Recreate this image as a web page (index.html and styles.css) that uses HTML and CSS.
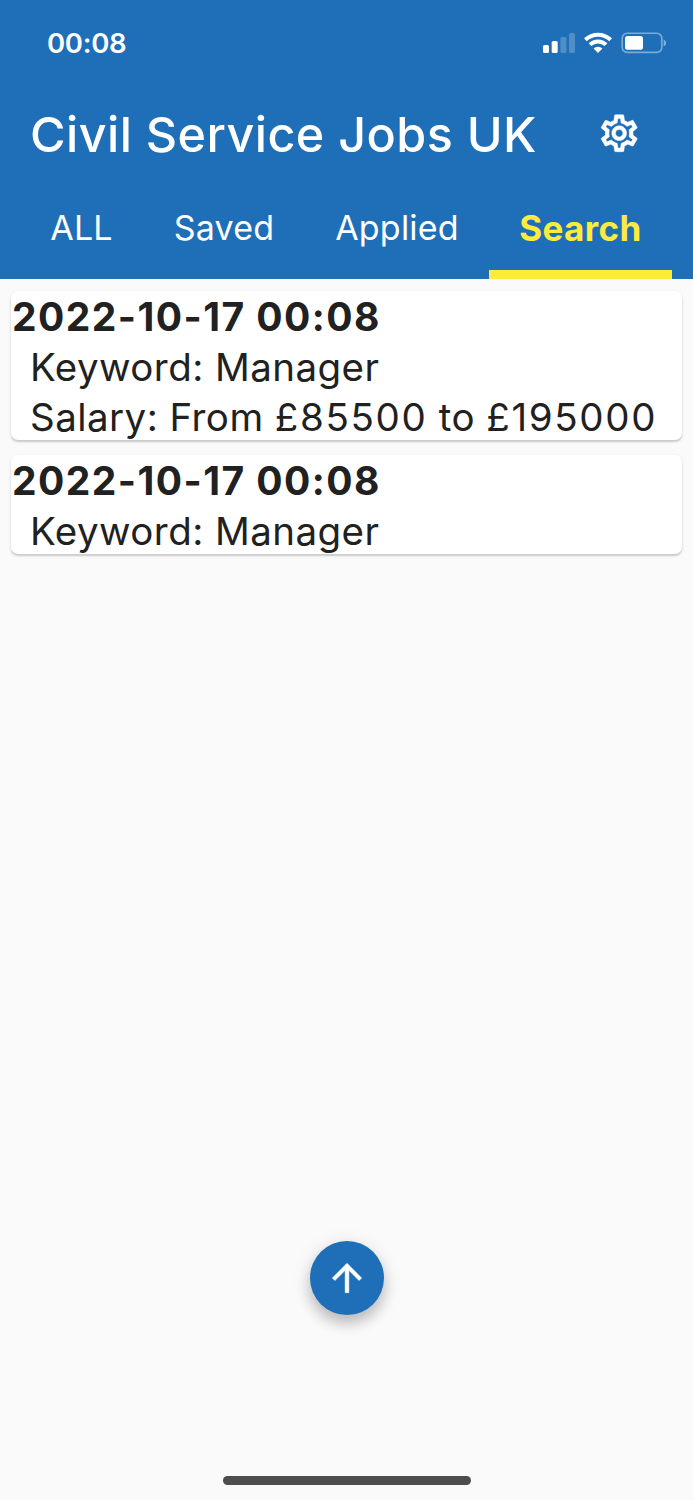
FILE: index.html
```html
<!DOCTYPE html>
<html lang="en">
<head>
  <meta charset="UTF-8">
  <meta name="viewport" content="width=device-width, initial-scale=1.0">
  <title>Civil Service Jobs UK</title>
  <link rel="stylesheet" href="styles.css">
</head>
<body>
  <header>
    <div class="status-bar">
      <span class="time">00:08</span>
      <svg class="status-icons" width="124" height="22" viewBox="0 0 124 22">
        <!-- Signal -->
        <g fill="#fff">
          <rect x="0" y="13" width="6" height="8" rx="1.6"/>
          <rect x="8.7" y="9" width="6" height="12" rx="1.6"/>
          <rect x="17.4" y="5" width="6" height="16" rx="1.6" opacity=".22"/>
          <rect x="26" y="1" width="6" height="20" rx="1.6" opacity=".22"/>
        </g>
        <!-- Wifi -->
        <g fill="none" stroke="#fff" stroke-width="4">
          <path d="M42.4 7.8a18 18 0 0 1 25.2 0"/>
          <path d="M47 12.7a11.4 11.4 0 0 1 16 0"/>
        </g>
        <path d="M55 21l-4.4-4.5a6.2 6.2 0 0 1 8.8 0z" fill="#fff"/>
        <!-- Battery -->
        <rect x="79.2" y="1.2" width="39.6" height="19.2" rx="5" fill="none" stroke="#fff" stroke-width="1.6" opacity=".42"/>
        <rect x="82" y="4" width="18" height="13.8" rx="2.6" fill="#fff"/>
        <path d="M120.6 7.4q2.6 1.2 2.6 3.5t-2.6 3.5z" fill="#fff" opacity=".45"/>
      </svg>
    </div>
    <div class="app-bar">
      <h1>Civil Service Jobs UK</h1>
      <svg class="settings" viewBox="0 0 24 24" fill="#fff" stroke="#fff" stroke-width=".25">
        <path d="M19.43 12.98c.04-.32.07-.64.07-.98 0-.34-.03-.66-.07-.98l2.11-1.65c.19-.15.24-.42.12-.64l-2-3.46c-.09-.16-.26-.25-.44-.25-.06 0-.12.01-.17.03l-2.49 1c-.52-.4-1.08-.73-1.69-.98l-.38-2.65C14.46 2.18 14.25 2 14 2h-4c-.25 0-.46.18-.49.42l-.38 2.65c-.61.25-1.17.59-1.69.98l-2.49-1c-.06-.02-.12-.03-.18-.03-.17 0-.34.09-.43.25l-2 3.46c-.13.22-.07.49.12.64l2.11 1.65c-.04.32-.07.65-.07.98 0 .33.03.66.07.98l-2.11 1.65c-.19.15-.24.42-.12.64l2 3.46c.09.16.26.25.44.25.06 0 .12-.01.17-.03l2.49-1c.52.4 1.08.73 1.69.98l.38 2.65c.03.24.24.42.49.42h4c.25 0 .46-.18.49-.42l.38-2.65c.61-.25 1.17-.59 1.69-.98l2.49 1c.06.02.12.03.18.03.17 0 .34-.09.43-.25l2-3.46c.12-.22.07-.49-.12-.64l-2.11-1.65zm-1.98-1.71c.04.31.05.52.05.73 0 .21-.02.43-.05.73l-.14 1.13.89.7 1.08.84-.7 1.21-1.27-.51-1.04-.42-.9.68c-.43.32-.84.56-1.25.73l-1.06.43-.16 1.13-.2 1.35h-1.4l-.19-1.35-.16-1.13-1.06-.43c-.43-.18-.83-.41-1.23-.71l-.91-.7-1.06.43-1.27.51-.7-1.21 1.08-.84.89-.7-.14-1.13c-.03-.31-.05-.54-.05-.74s.02-.43.05-.73l.14-1.13-.89-.7-1.08-.84.7-1.21 1.27.51 1.04.42.9-.68c.43-.32.84-.56 1.25-.73l1.06-.43.16-1.13.2-1.35h1.39l.19 1.35.16 1.13 1.06.43c.43.18.83.41 1.23.71l.91.7 1.06-.43 1.27-.51.7 1.21-1.07.85-.89.7.14 1.13zM12 8c-2.21 0-4 1.79-4 4s1.79 4 4 4 4-1.79 4-4-1.79-4-4-4zm0 6c-1.1 0-2-.9-2-2s.9-2 2-2 2 .9 2 2-.9 2-2 2z"/>
      </svg>
    </div>
    <nav class="tabs">
      <a class="tab">ALL</a>
      <a class="tab">Saved</a>
      <a class="tab">Applied</a>
      <a class="tab active">Search</a>
    </nav>
  </header>

  <main>
    <div class="card">
      <h2>2022-10-17 00:08</h2>
      <p>Keyword: Manager</p>
      <p>Salary: From <span class="amount">£85500</span> to <span class="amount">£195000</span></p>
    </div>
    <div class="card">
      <h2>2022-10-17 00:08</h2>
      <p>Keyword: Manager</p>
    </div>
  </main>

  <footer>
    <button class="fab" aria-label="Scroll to top">
      <svg viewBox="0 0 24 24" fill="#fff" stroke="#fff" stroke-width=".3">
        <path d="M4 12l1.41 1.41L11 7.83V20h2V7.83l5.58 5.59L20 12l-8-8-8 8z"/>
      </svg>
    </button>
    <div class="home-indicator"></div>
  </footer>
</body>
</html>
```
FILE: styles.css
```css
* {
  box-sizing: border-box;
}
body {
  font-family: Inter, "Liberation Sans", sans-serif;
  margin: 0;
  height: 1500px;
  display: flex;
  flex-direction: column;
  background-color: #fafafa;
  color: #212121;
}
header {
  height: 279px;
  background-color: #1e6fb8;
  color: white;
}
.status-bar {
  display: flex;
  justify-content: space-between;
  align-items: center;
  height: 86px;
  padding: 0 26px 0 47px;
}
.time {
  font-size: 27.5px;
  font-weight: 600;
  letter-spacing: -0.3px;
}
.app-bar {
  display: flex;
  justify-content: space-between;
  align-items: center;
  height: 95px;
  padding: 0 52px 0 30px;
}
h1 {
  margin: 0;
  font-size: 48.5px;
  font-weight: 500;
  letter-spacing: 0.45px;
  line-height: 95px;
  padding-top: 2px;
  white-space: nowrap;
}
.settings {
  width: 44.4px;
  height: 44.4px;
}
.tabs {
  display: grid;
  grid-template-columns: 123px 162px 184px 183px;
  height: 98px;
  padding-left: 20px;
}
.tab {
  font-size: 34px;
  line-height: 94px;
  letter-spacing: 0.2px;
  text-align: center;
}
.tab.active {
  color: #ffeb3b;
  font-size: 35px;
  font-weight: 700;
  letter-spacing: 0.4px;
  box-shadow: inset 0 -9px #ffeb3b;
}
main {
  flex: 1;
  padding: 12px 11px;
}
.card {
  display: flow-root;
  margin-bottom: 15px;
  padding-top: 1px;
  background-color: white;
  border-radius: 7px;
  box-shadow: 0 2px 2px rgba(0, 0, 0, 0.17), 0 1px 4px rgba(0, 0, 0, 0.06);
}
.card h2, .card p {
  margin: 0;
  font-size: 38.5px;
  line-height: 50px;
  white-space: nowrap;
}
.card h2 {
  padding-left: 1px;
  font-size: 39px;
  font-weight: 700;
  letter-spacing: 1.45px;
}
.card p {
  padding-left: 19px;
  font-weight: 400;
  letter-spacing: 0.45px;
}
.card p:last-child {
  margin-bottom: -2px;
}
.card .amount {
  letter-spacing: 1.65px;
}
footer {
  display: flex;
  flex-direction: column;
  align-items: center;
}
.fab {
  width: 74px;
  height: 74px;
  margin: 0 0 161px;
  padding: 15px;
  border: none;
  border-radius: 50%;
  background-color: #1e6fb8;
  box-shadow: 0 9px 14px rgba(0, 0, 0, 0.2), 0 3px 20px rgba(0, 0, 0, 0.1);
}
.fab svg {
  display: block;
  width: 44px;
  height: 44px;
}
.home-indicator {
  width: 248px;
  height: 9px;
  margin-bottom: 15px;
  border-radius: 5px;
  background-color: #4d4d4d;
}
```
